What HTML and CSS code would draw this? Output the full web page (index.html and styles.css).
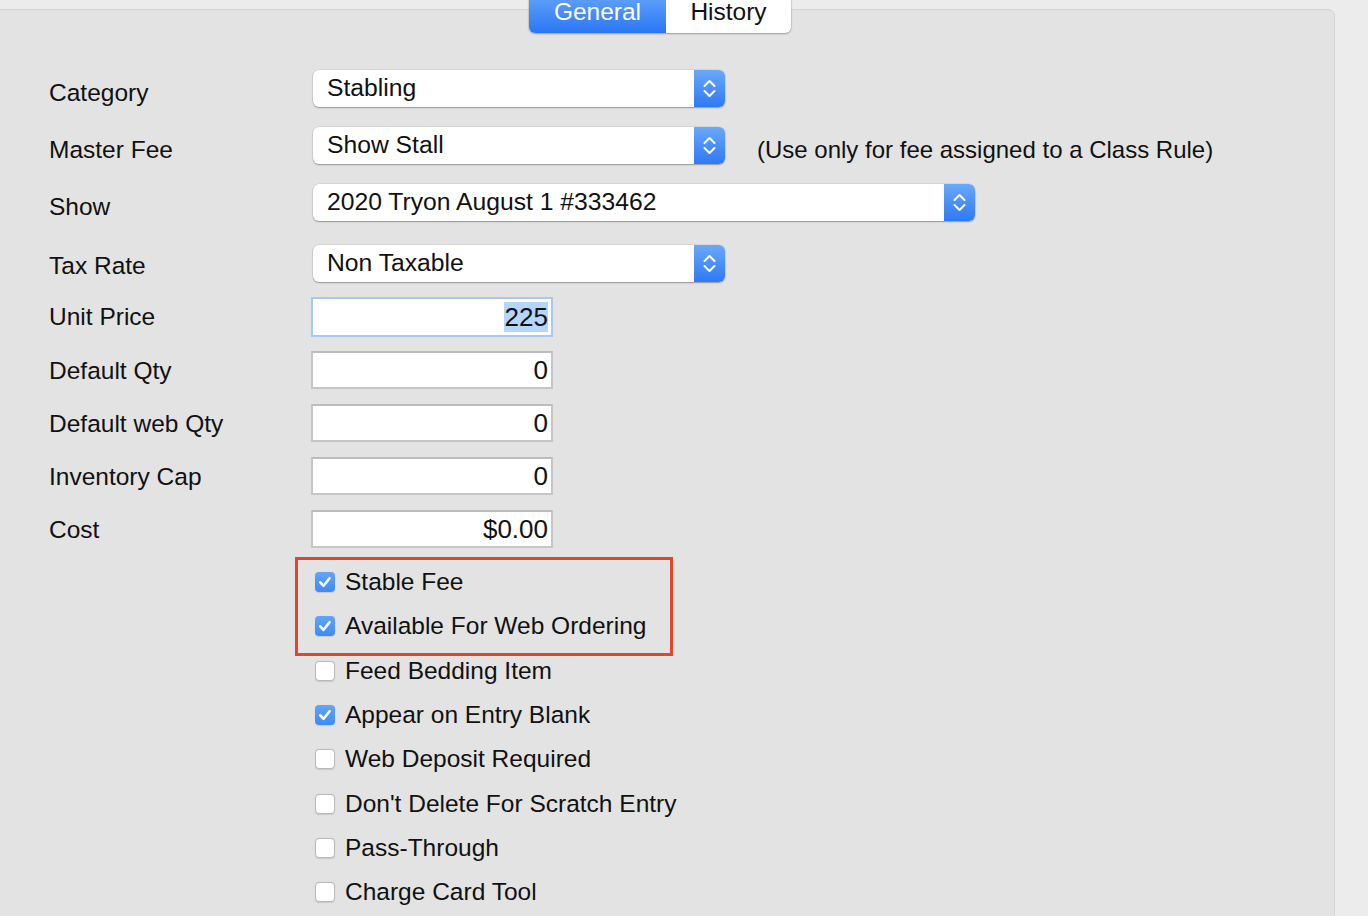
FILE: index.html
```html
<!DOCTYPE html>
<html>
<head>
<meta charset="utf-8">
<link rel="stylesheet" href="styles.css">
</head>
<body>
<div class="panel">
  <div class="tabs">
    <div class="tab active">General</div>
    <div class="tab">History</div>
  </div>
  <div class="form">
    <div class="row prow">
      <div class="label plabel">Category</div>
      <div class="popup w412"><span class="ptext">Stabling</span><span class="pbtn"><svg viewBox="0 0 31 37" width="31" height="37"><path d="M10.5 16 L15.5 11 L20.5 16 M10.5 21 L15.5 26 L20.5 21" fill="none" stroke="#fff" stroke-width="2" stroke-linecap="round" stroke-linejoin="round"/></svg></span></div>
    </div>
    <div class="row prow">
      <div class="label plabel">Master Fee</div>
      <div class="popup w412"><span class="ptext">Show Stall</span><span class="pbtn"><svg viewBox="0 0 31 37" width="31" height="37"><path d="M10.5 16 L15.5 11 L20.5 16 M10.5 21 L15.5 26 L20.5 21" fill="none" stroke="#fff" stroke-width="2" stroke-linecap="round" stroke-linejoin="round"/></svg></span></div>
      <div class="note">(Use only for fee assigned to a Class Rule)</div>
    </div>
    <div class="row prow">
      <div class="label plabel">Show</div>
      <div class="popup w662"><span class="ptext">2020 Tryon August 1 #333462</span><span class="pbtn"><svg viewBox="0 0 31 37" width="31" height="37"><path d="M10.5 16 L15.5 11 L20.5 16 M10.5 21 L15.5 26 L20.5 21" fill="none" stroke="#fff" stroke-width="2" stroke-linecap="round" stroke-linejoin="round"/></svg></span></div>
    </div>
    <div class="row prow tax">
      <div class="label plabel tlabel">Tax Rate</div>
      <div class="popup w412"><span class="ptext">Non Taxable</span><span class="pbtn"><svg viewBox="0 0 31 37" width="31" height="37"><path d="M10.5 16 L15.5 11 L20.5 16 M10.5 21 L15.5 26 L20.5 21" fill="none" stroke="#fff" stroke-width="2" stroke-linecap="round" stroke-linejoin="round"/></svg></span></div>
    </div>
    <div class="row frow first">
      <div class="label flabel">Unit Price</div>
      <div class="field focus"><span class="sel">225</span></div>
    </div>
    <div class="row frow">
      <div class="label flabel">Default Qty</div>
      <div class="field">0</div>
    </div>
    <div class="row frow">
      <div class="label flabel">Default web Qty</div>
      <div class="field">0</div>
    </div>
    <div class="row frow">
      <div class="label flabel">Inventory Cap</div>
      <div class="field">0</div>
    </div>
    <div class="row frow">
      <div class="label flabel">Cost</div>
      <div class="field">$0.00</div>
    </div>
    <div class="checks">
      <div class="highlight">
        <div class="check"><span class="box on"><svg viewBox="0 0 20 20" width="20" height="20"><path d="M5.3 10.3 L8.6 13.8 L14.6 6.2" fill="none" stroke="#fff" stroke-width="2.6" stroke-linecap="round" stroke-linejoin="round"/></svg></span>Stable Fee</div>
        <div class="check"><span class="box on"><svg viewBox="0 0 20 20" width="20" height="20"><path d="M5.3 10.3 L8.6 13.8 L14.6 6.2" fill="none" stroke="#fff" stroke-width="2.6" stroke-linecap="round" stroke-linejoin="round"/></svg></span>Available For Web Ordering</div>
      </div>
      <div class="check"><span class="box"></span>Feed Bedding Item</div>
      <div class="check"><span class="box on"><svg viewBox="0 0 20 20" width="20" height="20"><path d="M5.3 10.3 L8.6 13.8 L14.6 6.2" fill="none" stroke="#fff" stroke-width="2.6" stroke-linecap="round" stroke-linejoin="round"/></svg></span>Appear on Entry Blank</div>
      <div class="check"><span class="box"></span>Web Deposit Required</div>
      <div class="check"><span class="box"></span>Don't Delete For Scratch Entry</div>
      <div class="check"><span class="box"></span>Pass-Through</div>
      <div class="check"><span class="box"></span>Charge Card Tool</div>
    </div>
  </div>
</div>
</body>
</html>
```

FILE: styles.css
```css
html, body {
  margin: 0;
  padding: 0;
  overflow: hidden;
  height: 100%;
}
body {
  background: #ececec;
  font-family: "Liberation Sans", Arial, sans-serif;
  font-size: 24.5px;
  color: #111;
}
.panel {
  margin-top: 9px;
  margin-left: -10px;
  width: 1345px;
  height: 1000px;
  background: #e3e3e3;
  border: 1px solid #d3d3d3;
  border-radius: 7px;
  box-sizing: border-box;
}
.tabs {
  display: flex;
  width: 262px;
  height: 42px;
  margin: -19px 0 0 538px;
  border-radius: 6px;
  background: #fff;
  box-shadow: 0 1px 2px rgba(0,0,0,0.25), 0 0 0 1px rgba(0,0,0,0.06);
  overflow: hidden;
  font-size: 24.5px;
}
.tab {
  display: flex;
  align-items: center;
  justify-content: center;
  height: 42px;
  line-height: 42px;
  color: #111;
  width: 125px;
}
.tab.active {
  width: 137px;
  color: #fff;
  background: linear-gradient(#69a7fa, #2a76f5);
}
.form {
  padding-left: 58px;
  margin-top: 37px;
}
.row {
  display: flex;
  align-items: flex-start;
}
.label {
  width: 262px;
  flex: none;
  line-height: 28px;
}
.prow {
  height: 37px;
  margin-bottom: 20px;
}
.prow.tax {
  margin-top: 24px;
  margin-bottom: 15px;
}
.plabel {
  margin-top: 9px;
}
.plabel.tlabel {
  margin-top: 7px;
}
.popup {
  display: flex;
  height: 37px;
  margin-left: 2px;
  background: #fff;
  border-radius: 6px;
  box-shadow: 0 1px 1.5px rgba(0,0,0,0.3), 0 0 0 0.5px rgba(0,0,0,0.1);
  overflow: hidden;
}
.w412 { width: 412px; }
.w662 { width: 662px; }
.ptext {
  flex: 1;
  padding-left: 14px;
  line-height: 35px;
  font-size: 24.7px;
}
.pbtn {
  width: 31px;
  height: 37px;
  flex: none;
  background: linear-gradient(#6aa8f9, #2e79f5);
}
.pbtn svg { display: block; }
.note {
  margin-left: 32px;
  margin-top: 9px;
  line-height: 28px;
  font-size: 24px;
}
.frow {
  height: 38px;
  margin-bottom: 15px;
}
.frow.first { height: 40px; margin-bottom: 14px; }
.flabel { margin-top: 6px; }
.field {
  width: 242px;
  height: 38px;
  box-sizing: border-box;
  background: #fff;
  border: 2px solid #c6c6c6;
  border-top-color: #bcbcbc;
  text-align: right;
  padding-right: 3px;
  line-height: 34px;
  font-size: 26px;
}
.field.focus {
  height: 40px;
  border: 2px solid #a8c8f2;
  line-height: 36px;
}
.sel {
  background: #b4d5fd;
  padding-left: 1px;
}
.checks {
  margin-left: 264px;
  margin-top: -6px;
}
.highlight {
  margin: -3px 0 -7px -18px;
  width: 378px;
  box-sizing: border-box;
  border: 3px solid #e5432b;
  padding: 0 0 4px 15px;
}
.check {
  display: flex;
  align-items: center;
  height: 44.3px;
  line-height: 28px;
}
.box {
  width: 20px;
  height: 20px;
  box-sizing: border-box;
  flex: none;
  margin-left: 2px;
  margin-right: 10px;
  border-radius: 4px;
  background: #fff;
  border: 1px solid #b9b9b9;
  box-shadow: 0 0.5px 1px rgba(0,0,0,0.12);
}
.box.on {
  border: none;
  background: linear-gradient(#62a5f8, #3d8af5);
}
.box svg { display: block; }
```
